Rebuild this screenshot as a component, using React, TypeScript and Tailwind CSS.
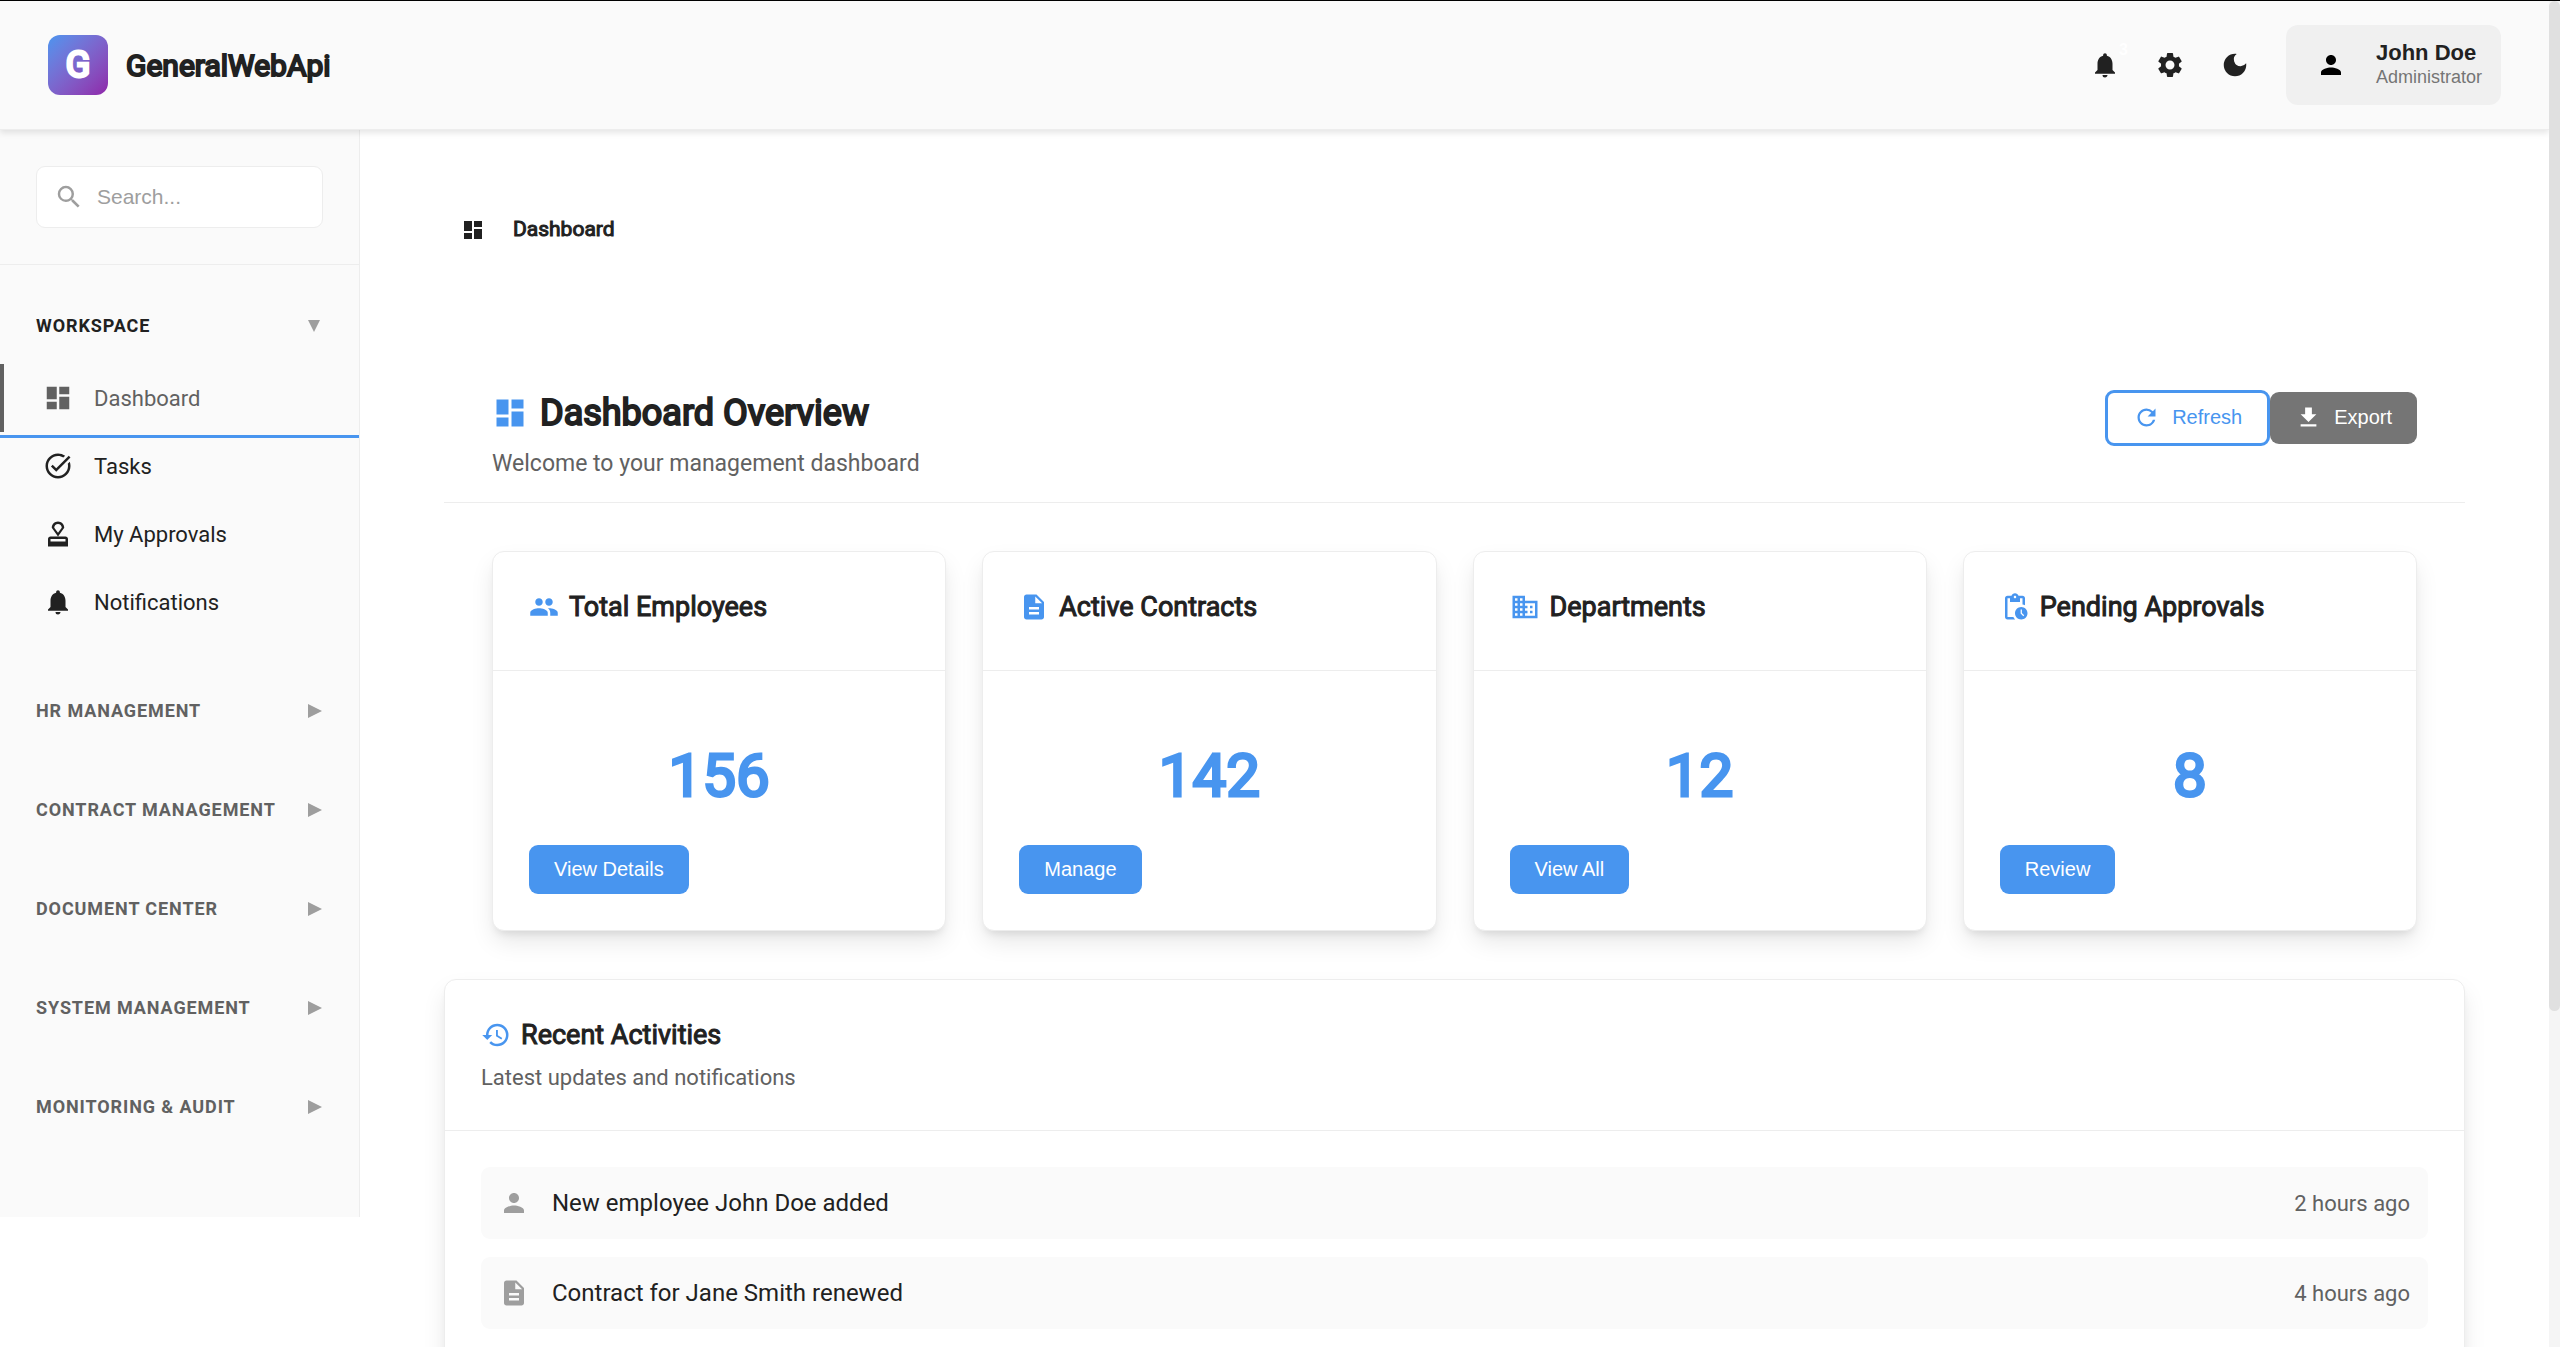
import type { IconType } from "react-icons";
import {
  MdApproval,
  MdBusiness,
  MdDarkMode,
  MdDashboard,
  MdDescription,
  MdFileDownload,
  MdHistory,
  MdNotifications,
  MdPendingActions,
  MdPeople,
  MdPerson,
  MdRefresh,
  MdSearch,
  MdSettings,
  MdTaskAlt,
} from "react-icons/md";

const sans = "font-['Liberation_Sans',Arial,sans-serif]";

// Headings use the regular cut thickened with a stroke, which keeps them narrow.
const heavySmall = "font-normal [-webkit-text-stroke:1px_currentColor]";
const heavy = "font-normal [-webkit-text-stroke:2px_currentColor] [paint-order:stroke_fill]";
const heavyLarge = "font-normal [-webkit-text-stroke:3px_currentColor] [paint-order:stroke_fill]";

const workspace: { label: string; icon: IconType; active?: boolean }[] = [
  { label: "Dashboard", icon: MdDashboard, active: true },
  { label: "Tasks", icon: MdTaskAlt },
  { label: "My Approvals", icon: MdApproval },
  { label: "Notifications", icon: MdNotifications },
];

const sections = [
  "HR MANAGEMENT",
  "CONTRACT MANAGEMENT",
  "DOCUMENT CENTER",
  "SYSTEM MANAGEMENT",
  "MONITORING & AUDIT",
];

const stats: { title: string; value: string; action: string; icon: IconType }[] = [
  { title: "Total Employees", value: "156", action: "View Details", icon: MdPeople },
  { title: "Active Contracts", value: "142", action: "Manage", icon: MdDescription },
  { title: "Departments", value: "12", action: "View All", icon: MdBusiness },
  { title: "Pending Approvals", value: "8", action: "Review", icon: MdPendingActions },
];

const activities: { text: string; time: string; icon: IconType }[] = [
  { text: "New employee John Doe added", time: "2 hours ago", icon: MdPerson },
  { text: "Contract for Jane Smith renewed", time: "4 hours ago", icon: MdDescription },
];

function Triangle({ open }: { open?: boolean }) {
  return open ? (
    <svg viewBox="0 0 12 12" className="size-3 fill-[#9e9e9e]" aria-hidden="true">
      <path d="M0 0h12L6 12z" />
    </svg>
  ) : (
    <svg viewBox="0 0 14 14" className="size-3.5 fill-[#9e9e9e]" aria-hidden="true">
      <path d="M0 0l14 7-14 7z" />
    </svg>
  );
}

function Header() {
  return (
    <header className="relative z-10 flex items-center justify-between border-b border-[#ededed] bg-[#fafafa] px-12 py-6 shadow-[0_3px_6px_rgba(0,0,0,0.1)]">
      <div className="flex items-center gap-[18px]">
        <div
          className={`flex size-[60px] items-center justify-center rounded-xl bg-linear-135 from-[#4895ef] to-[#8e24aa] text-4xl text-white ${heavyLarge}`}
        >
          G
        </div>
        <span className={`pt-0.5 text-[30px] leading-9 ${heavy}`}>GeneralWebApi</span>
      </div>
      <div className={`flex items-center ${sans}`}>
        <button type="button" aria-label="Notifications" className="relative flex w-[65px] justify-center">
          <MdNotifications className="size-[30px]" />
          <span className="absolute -top-2 left-[46px] text-base font-bold leading-4 text-white">3</span>
        </button>
        <button type="button" aria-label="Settings" className="flex w-[65px] justify-center">
          <MdSettings className="size-[30px]" />
        </button>
        <button type="button" aria-label="Dark mode" className="flex w-[65px] justify-center">
          <MdDarkMode className="size-[30px]" />
        </button>
        <button type="button" className="ml-[18px] flex h-20 items-center gap-[30px] rounded-xl bg-[#f0f0f0] pl-[30px] pr-[19px] text-left">
          <MdPerson className="size-[30px] text-black" />
          <span className="flex flex-col">
            <span className="text-[22px] font-bold leading-6">John Doe</span>
            <span className="text-lg leading-6 text-[#757575]">Administrator</span>
          </span>
        </button>
      </div>
    </header>
  );
}

function Sidebar() {
  return (
    <aside className="w-[360px] shrink-0 self-start border-r border-[#ededed] bg-[#fafafa] pb-[79px]">
      <div className="border-b border-[#ededed] p-9">
        <label className="flex h-[62px] items-center gap-[13px] rounded-[9px] border border-[#ededed] bg-white pl-[17px] pr-3">
          <MdSearch className="size-[30px] shrink-0 text-[#9e9e9e]" aria-hidden="true" />
          <input
            type="text"
            aria-label="Search"
            placeholder="Search..."
            className={`min-w-0 flex-1 text-[21px] leading-6 outline-none placeholder:text-[#9e9e9e] ${sans}`}
          />
        </label>
      </div>
      <nav className="pt-[30px]">
        <button type="button" className="flex h-[62px] w-full items-center justify-between pl-9 pr-[39px] text-lg font-bold tracking-wider">
          WORKSPACE
          <Triangle open />
        </button>
        <ul className="mb-11 mt-[7px]">
          {workspace.map(({ label, icon: Icon, active }) => (
            <li key={label} className="relative">
              <a
                href="#"
                className={
                  active
                    ? "flex h-[68px] items-center gap-[21px] border-l-4 border-[#616161] pl-[39px] text-[22px] text-[#616161]"
                    : "flex h-[68px] items-center gap-[21px] pl-[43px] text-[22px]"
                }
              >
                <Icon className="size-[30px]" />
                {label}
              </a>
              {active && <span className="absolute inset-x-0 -bottom-1.5 h-[3px] bg-[#4895ef]" />}
            </li>
          ))}
        </ul>
        <div className="flex flex-col gap-[37px]">
          {sections.map((name) => (
            <button
              key={name}
              type="button"
              className="flex h-[62px] w-full items-center justify-between pl-9 pr-[37px] text-lg font-bold tracking-wider text-[#616161]"
            >
              {name}
              <Triangle />
            </button>
          ))}
        </div>
      </nav>
    </aside>
  );
}

const cardClass =
  "rounded-xl border border-[#ededed] bg-white shadow-[0_12px_24px_-2px_rgba(0,0,0,0.1),0_6px_8px_-4px_rgba(0,0,0,0.1)]";

function StatCard({ title, value, action, icon: Icon }: (typeof stats)[number]) {
  return (
    <article className={cardClass}>
      <div className="flex h-[119px] items-center gap-[10px] border-b border-[#ededed] px-9 pb-2">
        <Icon className="size-[30px] text-[#4895ef]" />
        <h2 className={`text-[27px] leading-9 ${heavySmall}`}>{title}</h2>
      </div>
      <div className="p-9">
        <p className={`py-6 text-center text-6xl leading-[90px] text-[#4895ef] ${heavyLarge}`}>{value}</p>
        <button
          type="button"
          className={`h-[49px] rounded-[9px] bg-[#4895ef] px-[25px] pb-0.5 text-xl text-white ${sans}`}
        >
          {action}
        </button>
      </div>
    </article>
  );
}

export default function App() {
  return (
    <div className="flex h-screen overflow-hidden border-t border-black bg-white font-[Roboto,sans-serif] text-[#212121]">
      <div className="flex min-w-0 flex-1 flex-col overflow-hidden">
        <Header />
        <div className="flex">
          <Sidebar />
          <main className="min-w-0 flex-1 px-[84px] pt-[84px]">
            <nav aria-label="Breadcrumb" className={`flex h-8 items-center gap-7 px-[17px] text-[21px] ${heavySmall}`}>
              <MdDashboard className="size-6" />
              <span aria-current="page">Dashboard</span>
            </nav>
            <div className="mt-36 flex items-start justify-between border-b border-[#ededed] px-12 pb-[22px]">
              <div>
                <h1 className={`flex items-center gap-3 text-4xl leading-[46px] ${heavy}`}>
                  <MdDashboard className="size-9 text-[#4895ef]" />
                  Dashboard Overview
                </h1>
                <p className="mt-3 text-[23px] leading-8 text-[#616161]">Welcome to your management dashboard</p>
              </div>
              <div className={`flex items-center text-xl ${sans}`}>
                <button type="button" className="flex h-14 items-center gap-3 rounded-[9px] border-3 border-[#4895ef] px-[25px] pb-0.5 text-[#4895ef]">
                  <MdRefresh className="size-[27px]" />
                  Refresh
                </button>
                <button type="button" className="flex h-[52px] items-center gap-3 rounded-[9px] bg-[#757575] px-[25px] pb-0.5 text-white">
                  <MdFileDownload className="size-[27px]" />
                  Export
                </button>
              </div>
            </div>
            <section className="grid grid-cols-4 gap-9 px-12 py-12">
              {stats.map((s) => (
                <StatCard key={s.title} {...s} />
              ))}
            </section>
            <section className={cardClass}>
              <div className="h-[151px] border-b border-[#ededed] px-9 pt-[37px]">
                <h2 className={`flex items-center gap-[10px] text-[27px] leading-9 ${heavySmall}`}>
                  <MdHistory className="size-[30px] text-[#4895ef]" />
                  Recent Activities
                </h2>
                <p className="mt-[9px] text-[22px] leading-8 text-[#616161]">Latest updates and notifications</p>
              </div>
              <ul className="flex flex-col gap-[18px] p-9">
                {activities.map(({ text, time, icon: Icon }) => (
                  <li key={text} className="flex h-[72px] items-center rounded-[9px] bg-[#fafafa] px-[18px]">
                    <Icon className="mr-[23px] size-[30px] text-[#9e9e9e]" />
                    <span className="flex-1 text-2xl">{text}</span>
                    <time className="text-[22px] text-[#616161]">{time}</time>
                  </li>
                ))}
              </ul>
            </section>
          </main>
        </div>
      </div>
      <div aria-hidden="true" className="w-[11px] shrink-0 bg-[#f5f5f5]">
        <div className="h-3/4 rounded-full bg-[#e0e0e0]" />
      </div>
    </div>
  );
}
